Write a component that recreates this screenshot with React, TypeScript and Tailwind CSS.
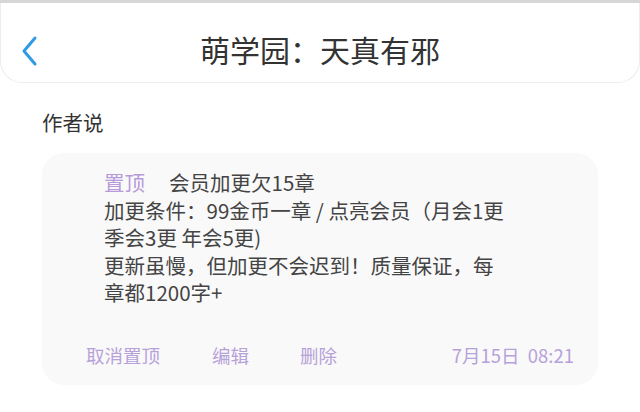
import * as React from 'react'

const font = { fontFamily: '"Noto Sans CJK SC", "Noto Sans", Roboto, sans-serif' }

export default function App() {
    return (
        <div className="w-[640px] h-[412px] bg-white overflow-hidden" style={font}>
            {/* top strip */}
            <div className="h-[3px] bg-[#d6d6d6]" />

            {/* Header */}
            <header className="relative h-[80px] flex items-center justify-center rounded-b-[22px] border-b border-x border-[#ececec] bg-white">
                <button className="absolute left-[20px] top-[32px] text-[#2f9ae6]">
                    <svg width="18" height="32" viewBox="0 0 18 32" fill="none">
                        <path d="M14 3 L3 16 L14 29" stroke="currentColor" strokeWidth="3" strokeLinecap="round" strokeLinejoin="round" />
                    </svg>
                </button>
                <h1 className="text-[30px] leading-none text-[#333] mt-[13px]">萌学园：天真有邪</h1>
            </header>

            {/* Author says */}
            <div className="px-[42px] pt-[26px]">
                <div className="text-[20.5px] leading-[26px] text-[#333]">作者说</div>

                <div className="mt-[18px] w-[556px] rounded-[22px] bg-[#f9f9fa] pt-[16px] pb-[18px]">
                    <div className="pl-[62px] pr-[30px] text-[20.5px] leading-[27.5px] text-[#444]">
                        <div>
                            <span className="text-[#b79ad9] mr-[24px]">置顶</span>会员加更欠15章
                        </div>
                        <div>加更条件：99金币一章 / 点亮会员（月会1更</div>
                        <div>季会3更 年会5更)</div>
                        <div>更新虽慢，但加更不会迟到！质量保证，每</div>
                        <div>章都1200字+</div>
                    </div>

                    <div className="mt-[36px] flex items-center pl-[44px] pr-[24px] text-[18.5px] leading-[24px] text-[#b7a1d9]">
                        <span>取消置顶</span>
                        <span className="ml-[52px]">编辑</span>
                        <span className="ml-[51px]">删除</span>
                        <span className="ml-auto">7月15日&nbsp;&nbsp;08:21</span>
                    </div>
                </div>
            </div>
        </div>
    )
}
